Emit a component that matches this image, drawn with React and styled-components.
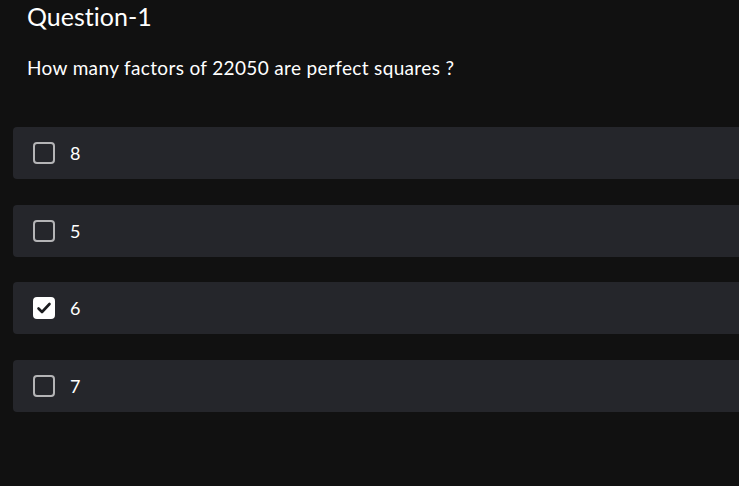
import styled, { createGlobalStyle } from 'styled-components';

const GlobalStyle = createGlobalStyle`
  html, body {
    margin: 0;
    padding: 0;
    background: #111111;
    overflow: hidden;
  }
  body {
    font-family: Lato, "Open Sans", sans-serif;
    font-variant-ligatures: none;
    color: #ffffff;
  }
`;

const Page = styled.main`
  width: 800px;
  min-height: 486px;
  padding: 0 0 0 13px;
  box-sizing: border-box;
`;

const Title = styled.h2`
  margin: 0;
  padding: 0 0 0 14px;
  font-size: 25px;
  font-weight: 400;
  line-height: 32px;
`;

const Prompt = styled.p`
  margin: 24px 0 0 14px;
  font-size: 19px;
  letter-spacing: 0.35px;
  line-height: 24px;
`;

const Options = styled.div`
  display: flex;
  flex-direction: column;
  gap: 25.6px;
  margin-top: 47px;
`;

const Option = styled.label`
  display: flex;
  align-items: center;
  gap: 15px;
  height: 52px;
  padding-left: 20px;
  background: #25262b;
  border-radius: 4px;
  font-size: 18px;
  cursor: pointer;
`;

const Box = styled.span`
  display: flex;
  align-items: center;
  justify-content: center;
  width: 22px;
  height: 22px;
  box-sizing: border-box;
  border-radius: 4px;
  border: 2px solid ${({ checked }) => (checked ? '#ffffff' : '#b4b4b6')};
  background: ${({ checked }) => (checked ? '#ffffff' : 'transparent')};
`;

const options = [
  { value: '8', checked: false },
  { value: '5', checked: false },
  { value: '6', checked: true },
  { value: '7', checked: false },
];

const Check = () => (
  <svg width="16" height="16" viewBox="0 0 16 16" fill="none">
    <path d="M2.5 8.5 L6 12 L13.5 4" stroke="#1a1b1e" strokeWidth="2.6" strokeLinecap="round" strokeLinejoin="round" />
  </svg>
);

export default function App() {
  return (
    <>
      <GlobalStyle />
      <Page>
        <Title>Question-1</Title>
        <Prompt>How many factors of 22050 are perfect squares ?</Prompt>
        <Options>
          {options.map((opt) => (
            <Option key={opt.value}>
              <Box checked={opt.checked}>{opt.checked && <Check />}</Box>
              <span>{opt.value}</span>
            </Option>
          ))}
        </Options>
      </Page>
    </>
  );
}
